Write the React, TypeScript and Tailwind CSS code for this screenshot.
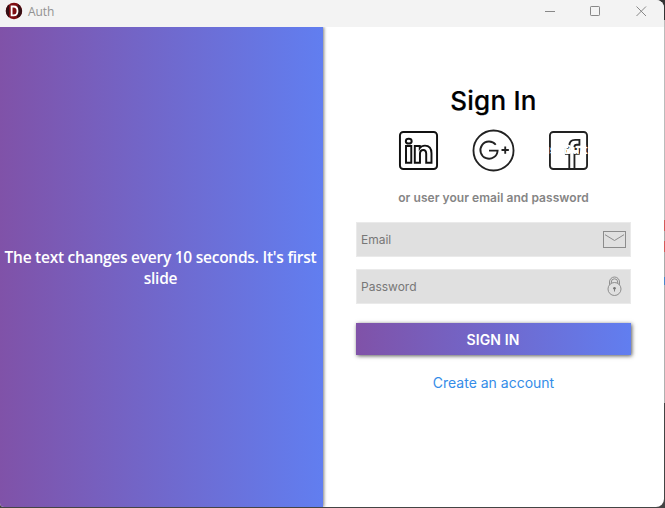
import React from "react";

function TitleBar() {
  return (
    <header className="flex h-[27px] shrink-0 items-start bg-[#f3f3f3] font-['Open_Sans',sans-serif]">
      <svg className="ml-[5px] mt-[2px] h-[18px] w-[18px]" viewBox="0 0 18 18" fill="none">
        <circle cx="9" cy="9" r="8.2" fill="#7d0d12" />
        <path d="M4 2.5A8.2 8.2 0 0 0 4 15.5ZM13 2.1A8.2 8.2 0 0 1 15 14.5L12 16Z" fill="#351015" />
        <path d="M6.6 4.5h1.9c2.6 0 4 1.6 4 4.4s-1.4 4.4-4 4.4H6.6Z" stroke="#fff" strokeWidth="1.8" />
      </svg>
      <span className="ml-[5px] mt-[3px] text-[12px] leading-[18px] tracking-[-0.1px] text-[#929292]">Auth</span>
      <svg className="ml-auto mr-[17px] mt-[5px] h-[12px] w-[102px]" viewBox="0 0 102 12" fill="none" stroke="#878787" strokeWidth="1">
        <path d="M0 6.5h10" />
        <rect x="45.5" y="1.5" width="9" height="9" rx="0.7" />
        <path d="m91.5 1.5 9.5 9.5m0-9.5-9.5 9.5" />
      </svg>
    </header>
  );
}

function SocialLinks() {
  return (
    <div className="mt-[10px] flex h-[44px] items-center justify-center text-[#222]">
      <svg className="h-[41px] w-[41px]" viewBox="0 0 42 42" fill="none" stroke="#111" strokeWidth="2">
        <rect x="2" y="2" width="38" height="38" rx="3.5" />
        <ellipse cx="11" cy="11.4" rx="3" ry="2.5" />
        <path d="M8.2 16.3h5.4v17.2H8.2zM17.2 16.3h5.1v2.2c1.2-1.7 3-2.5 5.3-2.5 4.4 0 6.7 3 6.7 7.9v9.6h-5.4v-9.1c0-2.6-.9-4-3-4-2.2 0-3.4 1.5-3.4 4v9.1h-5.3Z" />
      </svg>
      <svg className="ml-[33px] h-[43px] w-[43px]" viewBox="0 0 44 44" fill="none" stroke="currentColor" strokeWidth="1.9">
        <circle cx="22" cy="22" r="20.5" />
        <path d="M24.3 16.1A8.8 8.8 0 1 0 26.2 22.2H17.4" />
        <path d="M30.2 21.5h7.5M34 17.8v7.5" />
      </svg>
      <div className="relative ml-[33px] h-[41px] w-[41px]">
        <svg className="h-full w-full" viewBox="0 0 42 42" fill="none" stroke="currentColor" strokeWidth="1.9">
          <rect x="2" y="2" width="38" height="38" rx="3.5" />
          <path d="M21.8 40V24.5h-3.5v-5h3.5v-3.1c0-4.4 2.2-6.3 6-6.3h4.4v5h-2.7c-1.8 0-2.4.8-2.4 2.4v2h5.2l-.7 5h-4.5V40" />
        </svg>
        <span className="absolute inset-0 flex items-center justify-center font-['Inter',sans-serif] text-[12px] font-bold text-white">PushButton</span>
      </div>
    </div>
  );
}

function MailIcon() {
  return (
    <svg className="h-[18px] w-[24px]" viewBox="0 0 24 18" fill="none" stroke="#8c8c8c">
      <rect x="0.5" y="0.5" width="22" height="16" />
      <path d="M2 3.7 11.5 9.5 21 3.7" />
    </svg>
  );
}

function LockIcon() {
  return (
    <svg className="mr-[4px] h-[21px] w-[16px]" viewBox="0 0 16 21" fill="none" stroke="#858585" strokeWidth="0.9">
      <circle cx="7.5" cy="13" r="6.5" />
      <path d="M2.5 8.7V6a5 5 0 0 1 10 0v2.7M4.3 7.2V6a3.2 3.2 0 0 1 6.4 0v1.2" />
      <circle cx="7.5" cy="12.2" r="1.3" fill="#747474" stroke="none" />
      <path d="M7.5 12.5v3" stroke="#747474" />
    </svg>
  );
}

function Field({ label, children }: { label: string; children: React.ReactNode }) {
  return (
    <div className="flex h-[35px] w-[275px] items-center justify-between border border-[#eaeaea] bg-[#e0e0e0] pl-[4.5px] pr-[3px]">
      <span className="text-[12px] text-[#777]">{label}</span>
      {children}
    </div>
  );
}

export default function App() {
  return (
    <div className="flex h-[508px] w-[665px] bg-[linear-gradient(to_bottom,#333_0_20px,#bbb_20px_220px,#d45b5b_220px_231px,#aaa_231px_241px,#d45b5b_241px_252px,#aaa_252px_277px,#4787cb_277px_285px,#b0b0b0_285px_403px,#444_403px)]">
      <main className="flex h-[507px] w-[664px] flex-col overflow-hidden rounded-[8px] rounded-bl-[4px] rounded-tl-none bg-white shadow-[0_1px_0_#444]">
        <TitleBar />
        <div className="flex flex-1 overflow-hidden">
          <section className="flex w-[323px] items-center justify-center bg-[linear-gradient(to_right,#8052a8,#617ef0)] shadow-[1px_0_3px_rgba(0,0,0,0.5)]">
            <p className="whitespace-nowrap pr-[2px] pt-px text-center font-['Open_Sans',sans-serif] text-[15.5px] font-semibold leading-[21px] tracking-[-0.25px] text-white">
              The text changes every 10 seconds. It's first<br />slide
            </p>
          </section>
          <section className="flex flex-1 flex-col items-center font-['Inter',sans-serif]">
            <h1 className="mt-[57px] text-[26px] font-medium leading-[34px] tracking-[0.25px] text-black [-webkit-text-stroke:0.2px_black]">Sign In</h1>
            <SocialLinks />
            <p className="mt-[17px] text-[12px] font-semibold leading-[18px] tracking-[0.05px] text-[#858585]">or user your email and password</p>
            <div className="mt-[15px] flex flex-col gap-[12px] pr-px">
              <Field label="Email"><MailIcon /></Field>
              <Field label="Password"><LockIcon /></Field>
            </div>
            <button className="mr-px mt-[19px] h-[32px] w-[275px] bg-[linear-gradient(to_right,#8052a8,#617ef0)] text-[14px] font-semibold tracking-[0.15px] text-white shadow-[1px_1px_4px_rgba(0,0,0,0.65)]">SIGN IN</button>
            <a className="mt-[18px] text-[14px] leading-[20px] text-[#348ce8]">Create an account</a>
          </section>
        </div>
      </main>
    </div>
  );
}
